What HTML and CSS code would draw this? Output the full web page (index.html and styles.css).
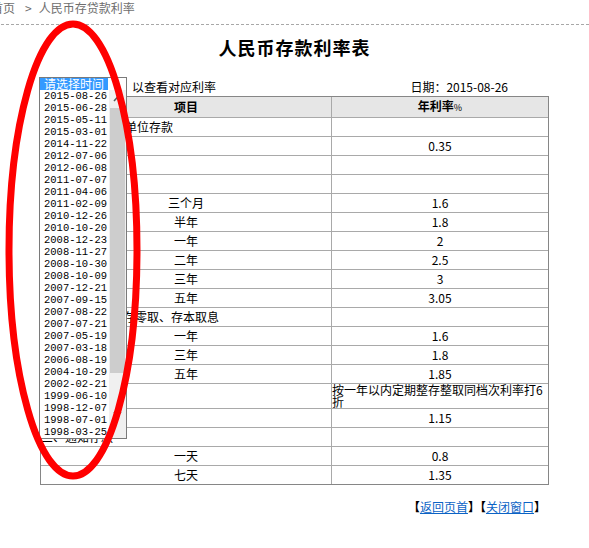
FILE: index.html
```html
<!DOCTYPE html>
<html lang="zh-CN">
<head>
<meta charset="utf-8">
<title>人民币存款利率表</title>
<link rel="stylesheet" href="styles.css">
</head>
<body>
<div class="crumb"><span>首页</span><span class="sep">&gt;</span><span>人民币存贷款利率</span></div>
<div class="main">
  <h1 class="title">人民币存款利率表</h1>
  <div class="info">
    <div class="pick"><span class="sel">请选择时间</span><span class="hint">以查看对应利率</span></div>
    <div class="date">日期：2015-08-26</div>
  </div>
  <table class="rates">
    <colgroup><col class="c1"><col class="c2"></colgroup>
    <tr class="head"><th>项目</th><th>年利率<span class="pct">%</span></th></tr>
    <tr><td class="l">一、城乡居民及单位存款</td><td></td></tr>
    <tr><td class="l">（一）活期</td><td>0.35</td></tr>
    <tr><td class="l">（二）定期</td><td></td></tr>
    <tr><td class="l">1.整存整取</td><td></td></tr>
    <tr><td>三个月</td><td>1.6</td></tr>
    <tr><td>半年</td><td>1.8</td></tr>
    <tr><td>一年</td><td>2</td></tr>
    <tr><td>二年</td><td>2.5</td></tr>
    <tr><td>三年</td><td>3</td></tr>
    <tr><td>五年</td><td>3.05</td></tr>
    <tr><td class="l">2.零存整取、整存零取、存本取息</td><td></td></tr>
    <tr><td>一年</td><td>1.6</td></tr>
    <tr><td>三年</td><td>1.8</td></tr>
    <tr><td>五年</td><td>1.85</td></tr>
    <tr><td class="l">3.定活两便</td><td class="wrap">按一年以内定期整存整取同档次利率打6折</td></tr>
    <tr><td class="l">二、协定存款</td><td>1.15</td></tr>
    <tr><td class="l">三、通知存款</td><td></td></tr>
    <tr><td>一天</td><td>0.8</td></tr>
    <tr class="last"><td>七天</td><td>1.35</td></tr>
  </table>
  <div class="links">【<a href="#">返回页首</a>】【<a href="#">关闭窗口</a>】</div>
</div>

<div class="dropdown">
  <div class="dd-head"><span class="hl">请选择时间</span></div>
  <div class="dd-body">
    <div class="dd-list">
      <div>2015-08-26</div><div>2015-06-28</div><div>2015-05-11</div><div>2015-03-01</div>
      <div>2014-11-22</div><div>2012-07-06</div><div>2012-06-08</div><div>2011-07-07</div>
      <div>2011-04-06</div><div>2011-02-09</div><div>2010-12-26</div><div>2010-10-20</div>
      <div>2008-12-23</div><div>2008-11-27</div><div>2008-10-30</div><div>2008-10-09</div>
      <div>2007-12-21</div><div>2007-09-15</div><div>2007-08-22</div><div>2007-07-21</div>
      <div>2007-05-19</div><div>2007-03-18</div><div>2006-08-19</div><div>2004-10-29</div>
      <div>2002-02-21</div><div>1999-06-10</div><div>1998-12-07</div><div>1998-07-01</div>
      <div>1998-03-25</div>
    </div>
    <div class="dd-bar">
      <div class="btn-up"><svg width="9" height="6" viewBox="0 0 9 6"><polyline points="1,5 4.5,1.2 8,5" fill="none" stroke="#5a5a5a" stroke-width="1.6"/></svg></div>
      <div class="thumb"></div>
      <div class="gap"></div>
      <div class="btn-down"><svg width="9" height="6" viewBox="0 0 9 6"><polyline points="1,1 4.5,4.8 8,1" fill="none" stroke="#5a5a5a" stroke-width="1.6"/></svg></div>
    </div>
  </div>
</div>

<svg class="mark" width="589" height="548" viewBox="0 0 589 548"><ellipse cx="73" cy="250" rx="64" ry="226" fill="none" stroke="#ff0000" stroke-width="7"/></svg>
</body>
</html>
```

FILE: styles.css
```css
html, body {
  margin: 0;
  padding: 0;
  background: #fff;
}
body {
  font-family: "Noto Sans CJK SC", "Noto Sans", sans-serif;
  font-size: 12px;
  color: #000;
  width: 589px;
  height: 548px;
  overflow: hidden;
  position: relative;
}
.crumb {
  margin-left: -9px;
  height: 24px;
  line-height: 16px;
  color: #6e6e6e;
  border-bottom: 1px dashed #a8a8a8;
  white-space: nowrap;
}
.crumb .sep {
  margin: 0 7px 0 10px;
}
.main {
  width: 509px;
  margin: 0 auto;
}
.title {
  margin: 10px 0 0;
  font-size: 18px;
  line-height: 24px;
  font-weight: bold;
  text-align: center;
  letter-spacing: 1px;
}
.info {
  margin-top: 19px;
  height: 18px;
  line-height: 18px;
  display: flex;
  justify-content: space-between;
}
.sel {
  display: inline-block;
  width: 86px;
}
.hint {
  margin-left: 6px;
}
.date {
  padding-right: 41px;
}
.rates {
  width: 509px;
  table-layout: fixed;
  border-collapse: separate;
  border-spacing: 0;
  border: 1px solid #868686;
}
.rates col.c1 { width: 291px; }
.rates th, .rates td {
  height: 18px;
  padding: 0;
  line-height: 18px;
  text-align: center;
  font-weight: normal;
  border-bottom: 1px solid #a9a9a9;
  vertical-align: middle;
}
.rates th:first-child, .rates td:first-child {
  border-right: 1px solid #a9a9a9;
}
.rates .head th {
  background: #e6e6e6;
  font-weight: bold;
}
.rates .pct {
  font-size: 9px;
  font-weight: normal;
}
.rates td.l {
  text-align: left;
  padding-left: 0;
}
.rates td.wrap {
  text-align: left;
  line-height: 12px;
  height: 24px;
}
.rates tr.last td {
  border-bottom: none;
}
.links {
  margin-top: 14px;
  line-height: 16px;
  text-align: right;
  padding-right: 3px;
  font-weight: bold;
}
.links a {
  color: #0b63c5;
  font-weight: normal;
  text-decoration: underline;
}

/* open date list over the page */
.dropdown {
  position: absolute;
  left: 39px;
  top: 77px;
  width: 86px;
  height: 360px;
  border: 1px solid #7a7a7a;
  background: #fff;
  overflow: hidden;
  line-height: 12px;
}
.dd-head {
  height: 12px;
  display: flex;
}
.dd-head .hl {
  width: 68px;
  padding-left: 4px;
  box-sizing: border-box;
  background: #3399ff;
  color: #fff;
  overflow: hidden;
  white-space: nowrap;
}
.dd-body {
  display: flex;
  height: 348px;
}
.dd-list {
  width: 69px;
  padding-left: 4px;
  box-sizing: border-box;
  overflow: hidden;
  font-family: "Liberation Mono", monospace;
  font-size: 10.5px;
}
.dd-list div {
  height: 12px;
  white-space: nowrap;
}
.dd-bar {
  width: 17px;
  background: #f0f0f0;
  display: flex;
  flex-direction: column;
  align-items: center;
}
.btn-up, .btn-down {
  height: 17px;
  width: 17px;
  display: flex;
  align-items: center;
  justify-content: center;
}
.btn-up { height: 18px; }
.thumb {
  width: 15px;
  height: 265px;
  background: #cdcdcd;
}
.gap { height: 32px; }

.mark {
  position: absolute;
  left: 0;
  top: 0;
  pointer-events: none;
}
```
